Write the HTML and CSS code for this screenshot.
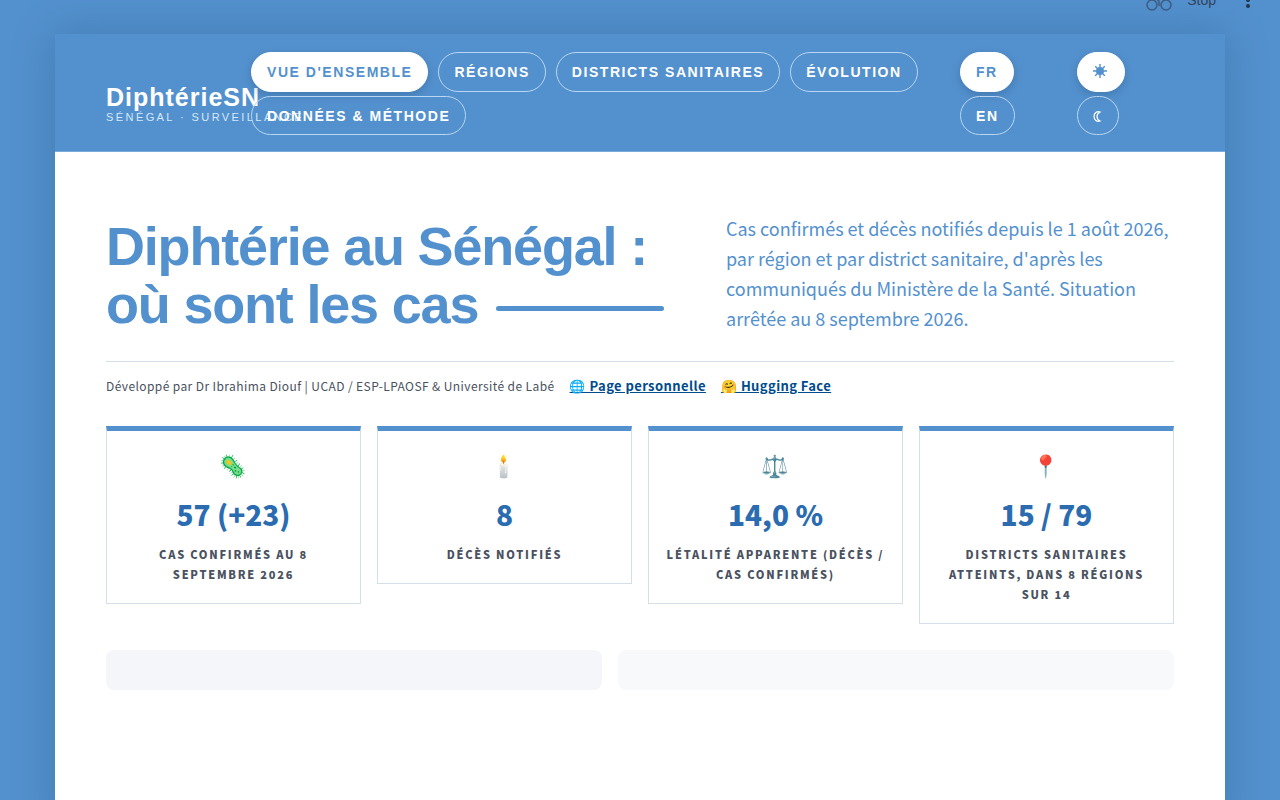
FILE: index.html
```html
<!DOCTYPE html>
<html lang="fr">
<head>
    <meta charset="UTF-8">
    <meta name="viewport" content="width=device-width, initial-scale=1.0">
    <title>DiphtérieSN</title>
    <link rel="stylesheet" href="styles.css">
</head>
<body>
    <div class="toolbar">
        <svg class="status-icon" width="28" height="24" viewBox="0 0 28 24" aria-hidden="true">
            <circle cx="7" cy="17" r="5"/>
            <circle cx="21" cy="17" r="5"/>
            <path d="M14 18v-5l-4-3 4-4 3 4h4"/>
        </svg>
        <button type="button" class="stop">Stop</button>
        <button type="button" class="menu" aria-label="Menu">
            <svg width="16" height="24" viewBox="0 0 16 24">
                <circle cx="8" cy="6" r="2"/>
                <circle cx="8" cy="12" r="2"/>
                <circle cx="8" cy="18" r="2"/>
            </svg>
        </button>
    </div>

    <div class="container">
        <header class="header">
            <div class="brand">
                <div class="brand-name">DiphtérieSN</div>
                <div class="brand-sub">Sénégal · Surveillance</div>
            </div>
            <nav class="pills">
                <button type="button" class="pill active">Vue d'ensemble</button>
                <button type="button" class="pill">Régions</button>
                <button type="button" class="pill">Districts sanitaires</button>
                <button type="button" class="pill">Évolution</button>
                <button type="button" class="pill">Données &amp; méthode</button>
            </nav>
            <div class="pills stacked">
                <button type="button" class="pill active">FR</button>
                <button type="button" class="pill">EN</button>
            </div>
            <div class="pills stacked">
                <button type="button" class="pill active" aria-label="Thème clair">
                    <svg class="sun" width="16" height="16" viewBox="0 0 16 16">
                        <circle cx="7" cy="7" r="4"/>
                        <path d="M7 0v3M7 11v3M0 7h3M11 7h3M2.200 2.200l2 2M9.800 9.800l2 2M11.800 2.200l-2 2M4.200 9.800l-2 2"/>
                    </svg>
                </button>
                <button type="button" class="pill" aria-label="Thème sombre">
                    <svg class="moon" width="10" height="16" viewBox="0 0 10 16">
                        <path d="M7 4C4 3 1 5 1 8.500S4 14 7 13C5 12 4 10.500 4 8.500S5 5 7 4z"/>
                    </svg>
                </button>
            </div>
        </header>

        <main class="content">
            <section class="hero">
                <h1>Diphtérie au Sénégal : <span class="last-line">où sont les cas</span></h1>
                <p class="lede">Cas confirmés et décès notifiés depuis le 1 août 2026, par région et par district sanitaire, d'après les communiqués du Ministère de la Santé. Situation arrêtée au 8 septembre 2026.</p>
            </section>

            <p class="credits">
                <span>Développé par Dr Ibrahima Diouf | UCAD / ESP-LPAOSF &amp; Université de Labé</span>
                <a href="#">🌐 Page personnelle</a>
                <a href="#">🤗 Hugging Face</a>
            </p>

            <section class="cards">
                <div class="card">
                    <div class="card-icon">🦠</div>
                    <div class="card-value">57 (+23)</div>
                    <div class="card-label">Cas confirmés au 8 septembre 2026</div>
                </div>
                <div class="card">
                    <div class="card-icon">🕯️</div>
                    <div class="card-value">8</div>
                    <div class="card-label">Décès notifiés</div>
                </div>
                <div class="card">
                    <div class="card-icon">⚖️</div>
                    <div class="card-value">14,0 %</div>
                    <div class="card-label">Létalité apparente (décès / cas confirmés)</div>
                </div>
                <div class="card">
                    <div class="card-icon">📍</div>
                    <div class="card-value">15 / 79</div>
                    <div class="card-label">Districts sanitaires atteints, dans 8 régions sur 14</div>
                </div>
            </section>

            <section class="placeholders">
                <div class="placeholder"></div>
                <div class="placeholder light"></div>
            </section>
        </main>
    </div>
</body>
</html>
```
FILE: styles.css
```css
* {
    box-sizing: border-box;
}
body {
    margin: 0;
    padding: 34px 55px 0;
    background-color: #5391ce;
    font-family: "Noto Sans CJK SC", "Noto Color Emoji", sans-serif;
    color: #4a5160;
    overflow: hidden;
}
button {
    font-family: "Liberation Sans", Arial, sans-serif;
    cursor: pointer;
}
/* app toolbar, mostly scrolled off the top edge */
.toolbar {
    position: absolute;
    top: -12px;
    right: 24px;
    display: flex;
    align-items: center;
    color: #31435a;
}
.status-icon {
    fill: none;
    stroke: #3d5c80;
    stroke-width: 1.5;
}
.stop {
    padding: 0 14px;
    border: none;
    background: none;
    color: inherit;
    font-size: 14px;
}
.menu {
    display: flex;
    padding: 0 0 0 10px;
    border: none;
    background: none;
}
.menu svg {
    fill: #22364e;
}
.container {
    max-width: 1170px;
    min-height: 100vh;
    margin: 0 auto;
    background-color: #fff;
    box-shadow: 0 0 40px rgba(20, 60, 90, 0.25);
}
.header {
    display: grid;
    grid-template-columns: 129px 1fr 101px 97px;
    column-gap: 16px;
    align-items: center;
    padding: 18px 51px 16px;
    background-color: #5391ce;
    border-bottom: 1px solid #79abdc;
}
.brand {
    padding-top: 20px;
    font-family: "Liberation Sans", Arial, sans-serif;
    white-space: nowrap;
    color: #fff;
}
.brand-name {
    font-size: 25px;
    font-weight: bold;
    line-height: 26px;
    letter-spacing: 1px;
}
.brand-sub {
    font-size: 11px;
    line-height: 14px;
    letter-spacing: 0.22em;
    text-transform: uppercase;
    color: #d6e8fa;
}
.pills {
    display: flex;
    flex-wrap: wrap;
    gap: 4px 10px;
}
.pills.stacked {
    flex-direction: column;
    align-items: flex-start;
}
.pill {
    min-height: 39px;
    padding: 0 15px;
    border: 1px solid #b9d6f2;
    border-radius: 20px;
    background: none;
    color: #fff;
    font-size: 14px;
    font-weight: bold;
    letter-spacing: 0.11em;
    text-transform: uppercase;
    white-space: nowrap;
}
.pill.active {
    min-height: 40px;
    border-color: #fff;
    background-color: #fff;
    color: #5391ce;
    box-shadow: 0 3px 8px rgba(20, 50, 90, 0.25);
}
.pill svg {
    display: block;
}
.sun {
    fill: currentColor;
    stroke: currentColor;
    stroke-width: 1.4;
}
.sun circle {
    stroke: none;
}
.moon {
    fill: none;
    stroke: currentColor;
    stroke-width: 1.2;
}
.content {
    padding: 61px 51px;
}
.hero {
    display: grid;
    grid-template-columns: 558px 1fr;
    column-gap: 62px;
    align-items: end;
    padding-bottom: 28px;
    border-bottom: 1px solid #d5dfea;
}
h1 {
    margin: 0;
    font-family: "Liberation Sans", Arial, sans-serif;
    font-size: 54px;
    line-height: 58px;
    letter-spacing: -0.022em;
    color: #5391ce;
}
.last-line {
    display: flex;
    align-items: center;
    gap: 18px;
}
.last-line::after {
    content: "";
    flex: 1;
    height: 5px;
    margin-top: 8px;
    border-radius: 3px;
    background-color: #5391ce;
}
.lede {
    margin: 0;
    font-size: 18px;
    line-height: 30px;
    color: #5391ce;
}
.credits {
    display: flex;
    gap: 15px;
    margin: 14px 0 30px;
    font-size: 12px;
    line-height: 20px;
    letter-spacing: 0.034em;
}
.credits a {
    font-size: 13px;
    font-weight: bold;
    color: #004b8d;
}
.cards {
    display: grid;
    grid-template-columns: repeat(4, 1fr);
    gap: 16px;
    align-items: start;
}
.card {
    padding: 18px 16px 19px;
    border: 1px solid #d5dfea;
    border-top: 5px solid #5391ce;
    text-align: center;
}
.card-icon {
    font-size: 22px;
    line-height: 30px;
}
.card-value {
    margin: 13px 0 8px;
    font-size: 28px;
    font-weight: 900;
    line-height: 44px;
    color: #2b6cb0;
}
.card-label {
    font-size: 11px;
    font-weight: 900;
    line-height: 20px;
    letter-spacing: 0.16em;
    text-transform: uppercase;
}
.placeholders {
    display: grid;
    grid-template-columns: 496fr 556fr;
    gap: 16px;
    margin-top: 26px;
}
.placeholder {
    height: 40px;
    border-radius: 8px;
    background-color: #f4f6fa;
}
.placeholder.light {
    background-color: #f8f9fa;
}
```
